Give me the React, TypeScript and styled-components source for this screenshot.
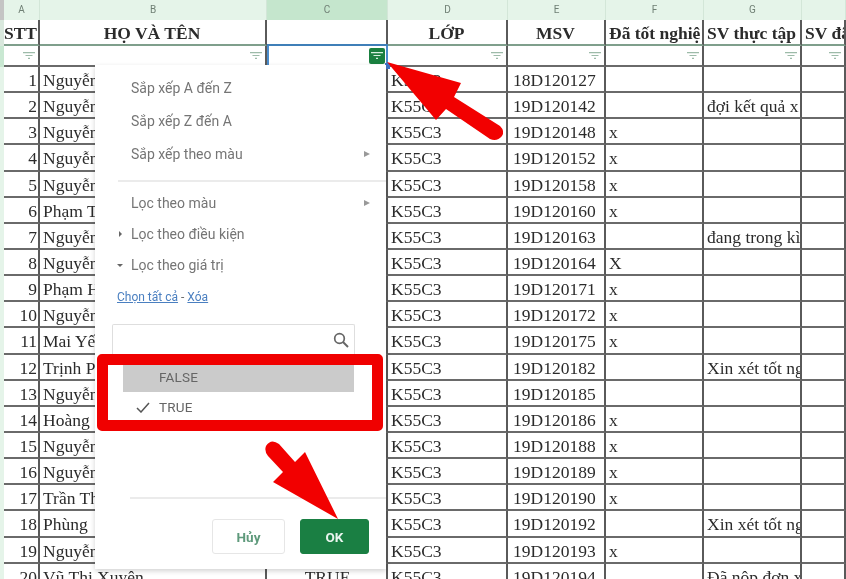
import React from "react";
import styled, { createGlobalStyle } from "styled-components";

const Global = createGlobalStyle`
  html, body { margin: 0; padding: 0; background: #fff; }
  #root { width: 846px; height: 579px; overflow: hidden; }
`;

const Page = styled.div`
  position: relative;
  width: 846px;
  height: 579px;
  overflow: hidden;
  background: #fff;
  filter: blur(0.35px);
`;

const Sheet = styled.div`
  display: grid;
  grid-template-columns: 4px 36px 227px 121px 120px 98px 98px 98px 44px;
  grid-template-rows: 20px 26px 21px repeat(20, 26.15px);
  width: 846px;
`;

const ColHead = styled.div<{ $on?: boolean }>`
  background: ${(p) => (p.$on ? "#c5e6cd" : "#e5f4e9")};
  border-right: 1px solid #d3e6d8;
  color: #6f7f74;
  font: 10px Roboto, sans-serif;
  display: flex;
  align-items: center;
  justify-content: center;
  padding-bottom: 2px;
  box-sizing: border-box;
`;

const Stub = styled.div<{ $tone: string }>`
  background: ${(p) => p.$tone};
`;

const Cell = styled.div<{ $align?: string; $bold?: boolean; $pad?: number }>`
  box-sizing: border-box;
  border-right: 2px solid #5a5a5a;
  border-bottom: 2px solid #6a6a6a;
  font: ${(p) => (p.$bold ? "bold 17.5px" : "17.5px")} "Liberation Serif", serif;
  color: #2b2b2b;
  white-space: nowrap;
  overflow: hidden;
  display: flex;
  align-items: center;
  padding: 3px 1px 0 ${(p) => p.$pad ?? 3}px;
  justify-content: ${(p) => p.$align || "flex-start"};
`;

const HeadCell = styled(Cell)`
  border-bottom-color: #7f9f8c;
`;

const FilterCell = styled(Cell)<{ $selected?: boolean }>`
  justify-content: flex-end;
  padding: 0 3px 0 0;
  ${(p) =>
    p.$selected
      ? "box-shadow: 0 -2px 0 #3f7fb8; border-left: 2px solid #4a8ccc; border-right: 2px solid #4a8ccc; padding-right: 1px; border-bottom-color: #fff;"
      : ""}
`;

const Menu = styled.div`
  position: absolute;
  left: 95px;
  top: 65px;
  width: 291px;
  height: 504px;
  box-sizing: border-box;
  background: #fff;
  box-shadow: 0 2px 5px rgba(0, 0, 0, 0.18);
  font: 14px Roboto, sans-serif;
  color: #757575;
  display: flex;
  flex-direction: column;
  padding-top: 6px;
`;

const MenuItem = styled.div<{ $h: number }>`
  height: ${(p) => p.$h}px;
  display: flex;
  align-items: center;
  justify-content: space-between;
  padding: 0 16px 0 36px;
  position: relative;
  flex: none;
`;

const Caret = styled.span<{ $dir: "right" | "down" }>`
  position: absolute;
  left: ${(p) => (p.$dir === "right" ? "24px" : "22px")};
  top: 50%;
  width: 0;
  height: 0;
  ${(p) =>
    p.$dir === "right"
      ? "margin-top: -3px; border-left: 3.5px solid #666; border-top: 3px solid transparent; border-bottom: 3px solid transparent;"
      : "margin-top: -1px; border-top: 3.5px solid #666; border-left: 3.5px solid transparent; border-right: 3.5px solid transparent;"}
`;

const SubArrow = styled.span`
  width: 0;
  height: 0;
  border-left: 6px solid #999;
  border-top: 3.5px solid transparent;
  border-bottom: 3.5px solid transparent;
`;

const Divider = styled.div<{ $left: number; $gap: number }>`
  height: 2px;
  flex: none;
  background: #ebebeb;
  margin: ${(p) => p.$gap}px 0 0 ${(p) => p.$left}px;
`;

const Links = styled.div`
  height: 20px;
  flex: none;
  margin: 2px 0 0 22px;
  font-size: 12px;
  color: #6a6a6a;
  display: flex;
  align-items: center;
  gap: 3px;
`;

const LinkText = styled.span`
  color: #4a7fc0;
  text-decoration: underline;
`;

const SearchBox = styled.div`
  flex: none;
  margin: 17px 0 0 17px;
  width: 243px;
  height: 31px;
  box-sizing: border-box;
  border: 1px solid #dedede;
  border-bottom: none;
  border-radius: 2px 2px 0 0;
  display: flex;
  align-items: center;
  justify-content: flex-end;
  padding-right: 4px;
`;

const Values = styled.div`
  flex: none;
  margin-left: 28px;
  width: 231px;
  height: 66px;
  display: flex;
  flex-direction: column;
  padding-top: 10px;
  box-sizing: border-box;
`;

const ValueRow = styled.div<{ $hl?: boolean }>`
  height: ${(p) => (p.$hl ? "27px" : "30px")};
  flex: none;
  background: ${(p) => (p.$hl ? "#cbcbcb" : "transparent")};
  color: #666;
  font-size: 13.5px;
  letter-spacing: 0.2px;
  display: flex;
  align-items: center;
  padding: 0 0 ${(p) => (p.$hl ? "3px" : "0")} 36px;
  box-sizing: border-box;
  position: relative;
`;

const Check = styled.svg`
  position: absolute;
  left: 13px;
  top: 10px;
`;

const Actions = styled.div`
  margin-top: 20px;
  display: flex;
  justify-content: flex-end;
  gap: 15px;
  padding-right: 17px;
`;

const Btn = styled.div<{ $primary?: boolean }>`
  height: 35px;
  width: ${(p) => (p.$primary ? "69px" : "73px")};
  box-sizing: border-box;
  border-radius: 3px;
  border: 1px solid ${(p) => (p.$primary ? "#1a7f43" : "#e6e6e6")};
  background: ${(p) => (p.$primary ? "#1a7f43" : "#fff")};
  color: ${(p) => (p.$primary ? "#e9f5ee" : "#5f9a7c")};
  font: bold 13.5px Roboto, sans-serif;
  display: flex;
  align-items: center;
  justify-content: center;
`;

const RedBox = styled.div`
  position: absolute;
  left: 97px;
  top: 354px;
  width: 286px;
  height: 77px;
  box-sizing: border-box;
  border: 11px solid #f00000;
  border-radius: 5px;
`;

const Overlay = styled.svg`
  position: absolute;
  left: 0;
  top: 0;
  pointer-events: none;
`;

const ActiveFilter = styled.div`
  width: 16px;
  height: 16px;
  background: #1a8040;
  border-radius: 2px;
  display: flex;
  align-items: center;
  justify-content: center;
`;

const Handle = styled.div`
  position: absolute;
  left: 385px;
  top: 63px;
  width: 5px;
  height: 6px;
  background: #3f72c4;
`;

const FilterIcon = ({ color = "#9dbba9" }: { color?: string }) => (
  <svg width="12" height="7" viewBox="0 0 12 7">
    <path d="M0 .7h12M2.5 3.5h7M5 6.3h2" stroke={color} strokeWidth="1.2" fill="none" />
  </svg>
);

const names = [
  "Nguyễn", "Nguyễn", "Nguyễn", "Nguyễn", "Nguyễn", "Phạm Thị", "Nguyễn", "Nguyễn",
  "Phạm Hữu", "Nguyễn", "Mai Yến", "Trịnh Phương", "Nguyễn", "Hoàng", "Nguyễn", "Nguyễn",
  "Trần Thị", "Phùng", "Nguyễn", "Vũ Thị Xuyên",
];
const msv = ["18D120127", "19D120142", "19D120148", "19D120152", "19D120158", "19D120160", "19D120163", "19D120164", "19D120171", "19D120172", "19D120175", "19D120182", "19D120185", "19D120186", "19D120188", "19D120189", "19D120190", "19D120192", "19D120193", "19D120194"];
const fVals: Record<number, string> = { 3: "x", 4: "x", 5: "x", 6: "x", 8: "X", 9: "x", 10: "x", 11: "x", 14: "x", 15: "x", 16: "x", 17: "x", 19: "x" };
const gVals: Record<number, string> = { 2: "đợi kết quả x", 7: "đang trong kì", 12: "Xin xét tốt ng", 18: "Xin xét tốt ng", 20: "Đã nộp đơn x" };

const heads = ["STT", "HỌ VÀ TÊN", "", "LỚP", "MSV", "Đã tốt nghiệ", "SV thực tập", "SV đã"];

export default function App() {
  return (
    <Page>
      <Global />
      <Sheet>
        <Stub $tone="#c4c4c4" />
        {["A", "B", "C", "D", "E", "F", "G", ""].map((c) => (
          <ColHead key={c || "h"} $on={c === "C"}>{c}</ColHead>
        ))}
        <Stub $tone="#d9e8dd" />
        {heads.map((h, i) => (
          <HeadCell key={i} $bold $pad={i >= 5 ? 3 : 0} $align={i >= 5 ? "flex-start" : "center"}>{h}</HeadCell>
        ))}
        <Stub $tone="#c9e8d2" />
        {heads.map((_, i) =>
          i === 2 ? (
            <FilterCell key={i} $selected>
              <ActiveFilter><FilterIcon color="#d8efe0" /></ActiveFilter>
            </FilterCell>
          ) : (
            <FilterCell key={i}><FilterIcon /></FilterCell>
          )
        )}
        {names.map((n, i) => (
          <React.Fragment key={i}>
            <Stub $tone="#e5f4e9" />
            <Cell $align="flex-end">{i + 1}</Cell>
            <Cell>{n}</Cell>
            <Cell $align="center">{i === 19 ? "TRUE" : ""}</Cell>
            <Cell>K55C3</Cell>
            <Cell $pad={5}>{msv[i]}</Cell>
            <Cell>{fVals[i + 1] || ""}</Cell>
            <Cell>{gVals[i + 1] || ""}</Cell>
            <Cell />
          </React.Fragment>
        ))}
      </Sheet>

      <Handle />

      <Menu>
        <MenuItem $h={33}>Sắp xếp A đến Z</MenuItem>
        <MenuItem $h={33}>Sắp xếp Z đến A</MenuItem>
        <MenuItem $h={34}>Sắp xếp theo màu<SubArrow /></MenuItem>
        <Divider $left={23} $gap={9} />
        <MenuItem $h={41}>Lọc theo màu<SubArrow /></MenuItem>
        <MenuItem $h={21}><Caret $dir="right" />Lọc theo điều kiện</MenuItem>
        <MenuItem $h={41}><Caret $dir="down" />Lọc theo giá trị</MenuItem>
        <Links><LinkText>Chọn tất cả</LinkText> - <LinkText>Xóa</LinkText></Links>
        <SearchBox>
          <svg width="18" height="18" viewBox="0 0 18 18">
            <circle cx="7.5" cy="7.5" r="4.8" stroke="#666" strokeWidth="1.7" fill="none" />
            <path d="M11 11l5 5" stroke="#666" strokeWidth="2" />
          </svg>
        </SearchBox>
        <Values>
          <ValueRow $hl>FALSE</ValueRow>
          <ValueRow>
            <Check width="14" height="11" viewBox="0 0 14 11">
              <path d="M1 6l4 4 8-9" stroke="#555" strokeWidth="1.5" fill="none" />
            </Check>
            TRUE
          </ValueRow>
        </Values>
        <Divider $left={35} $gap={76} />
        <Actions>
          <Btn>Hủy</Btn>
          <Btn $primary>OK</Btn>
        </Actions>
      </Menu>

      <RedBox />

      <Overlay width="846" height="579" viewBox="0 0 846 579">
        <path d="M387 62L461 83L454 97L500 126Q505 131 502 136Q497 142 490 139L446 109L436 120Z" fill="#f20000" />
        <path d="M338 519L305 452L295 462L279 444Q271 438 266 446Q264 451 268 456L283 472L273 482Z" fill="#f20000" />
      </Overlay>
    </Page>
  );
}
